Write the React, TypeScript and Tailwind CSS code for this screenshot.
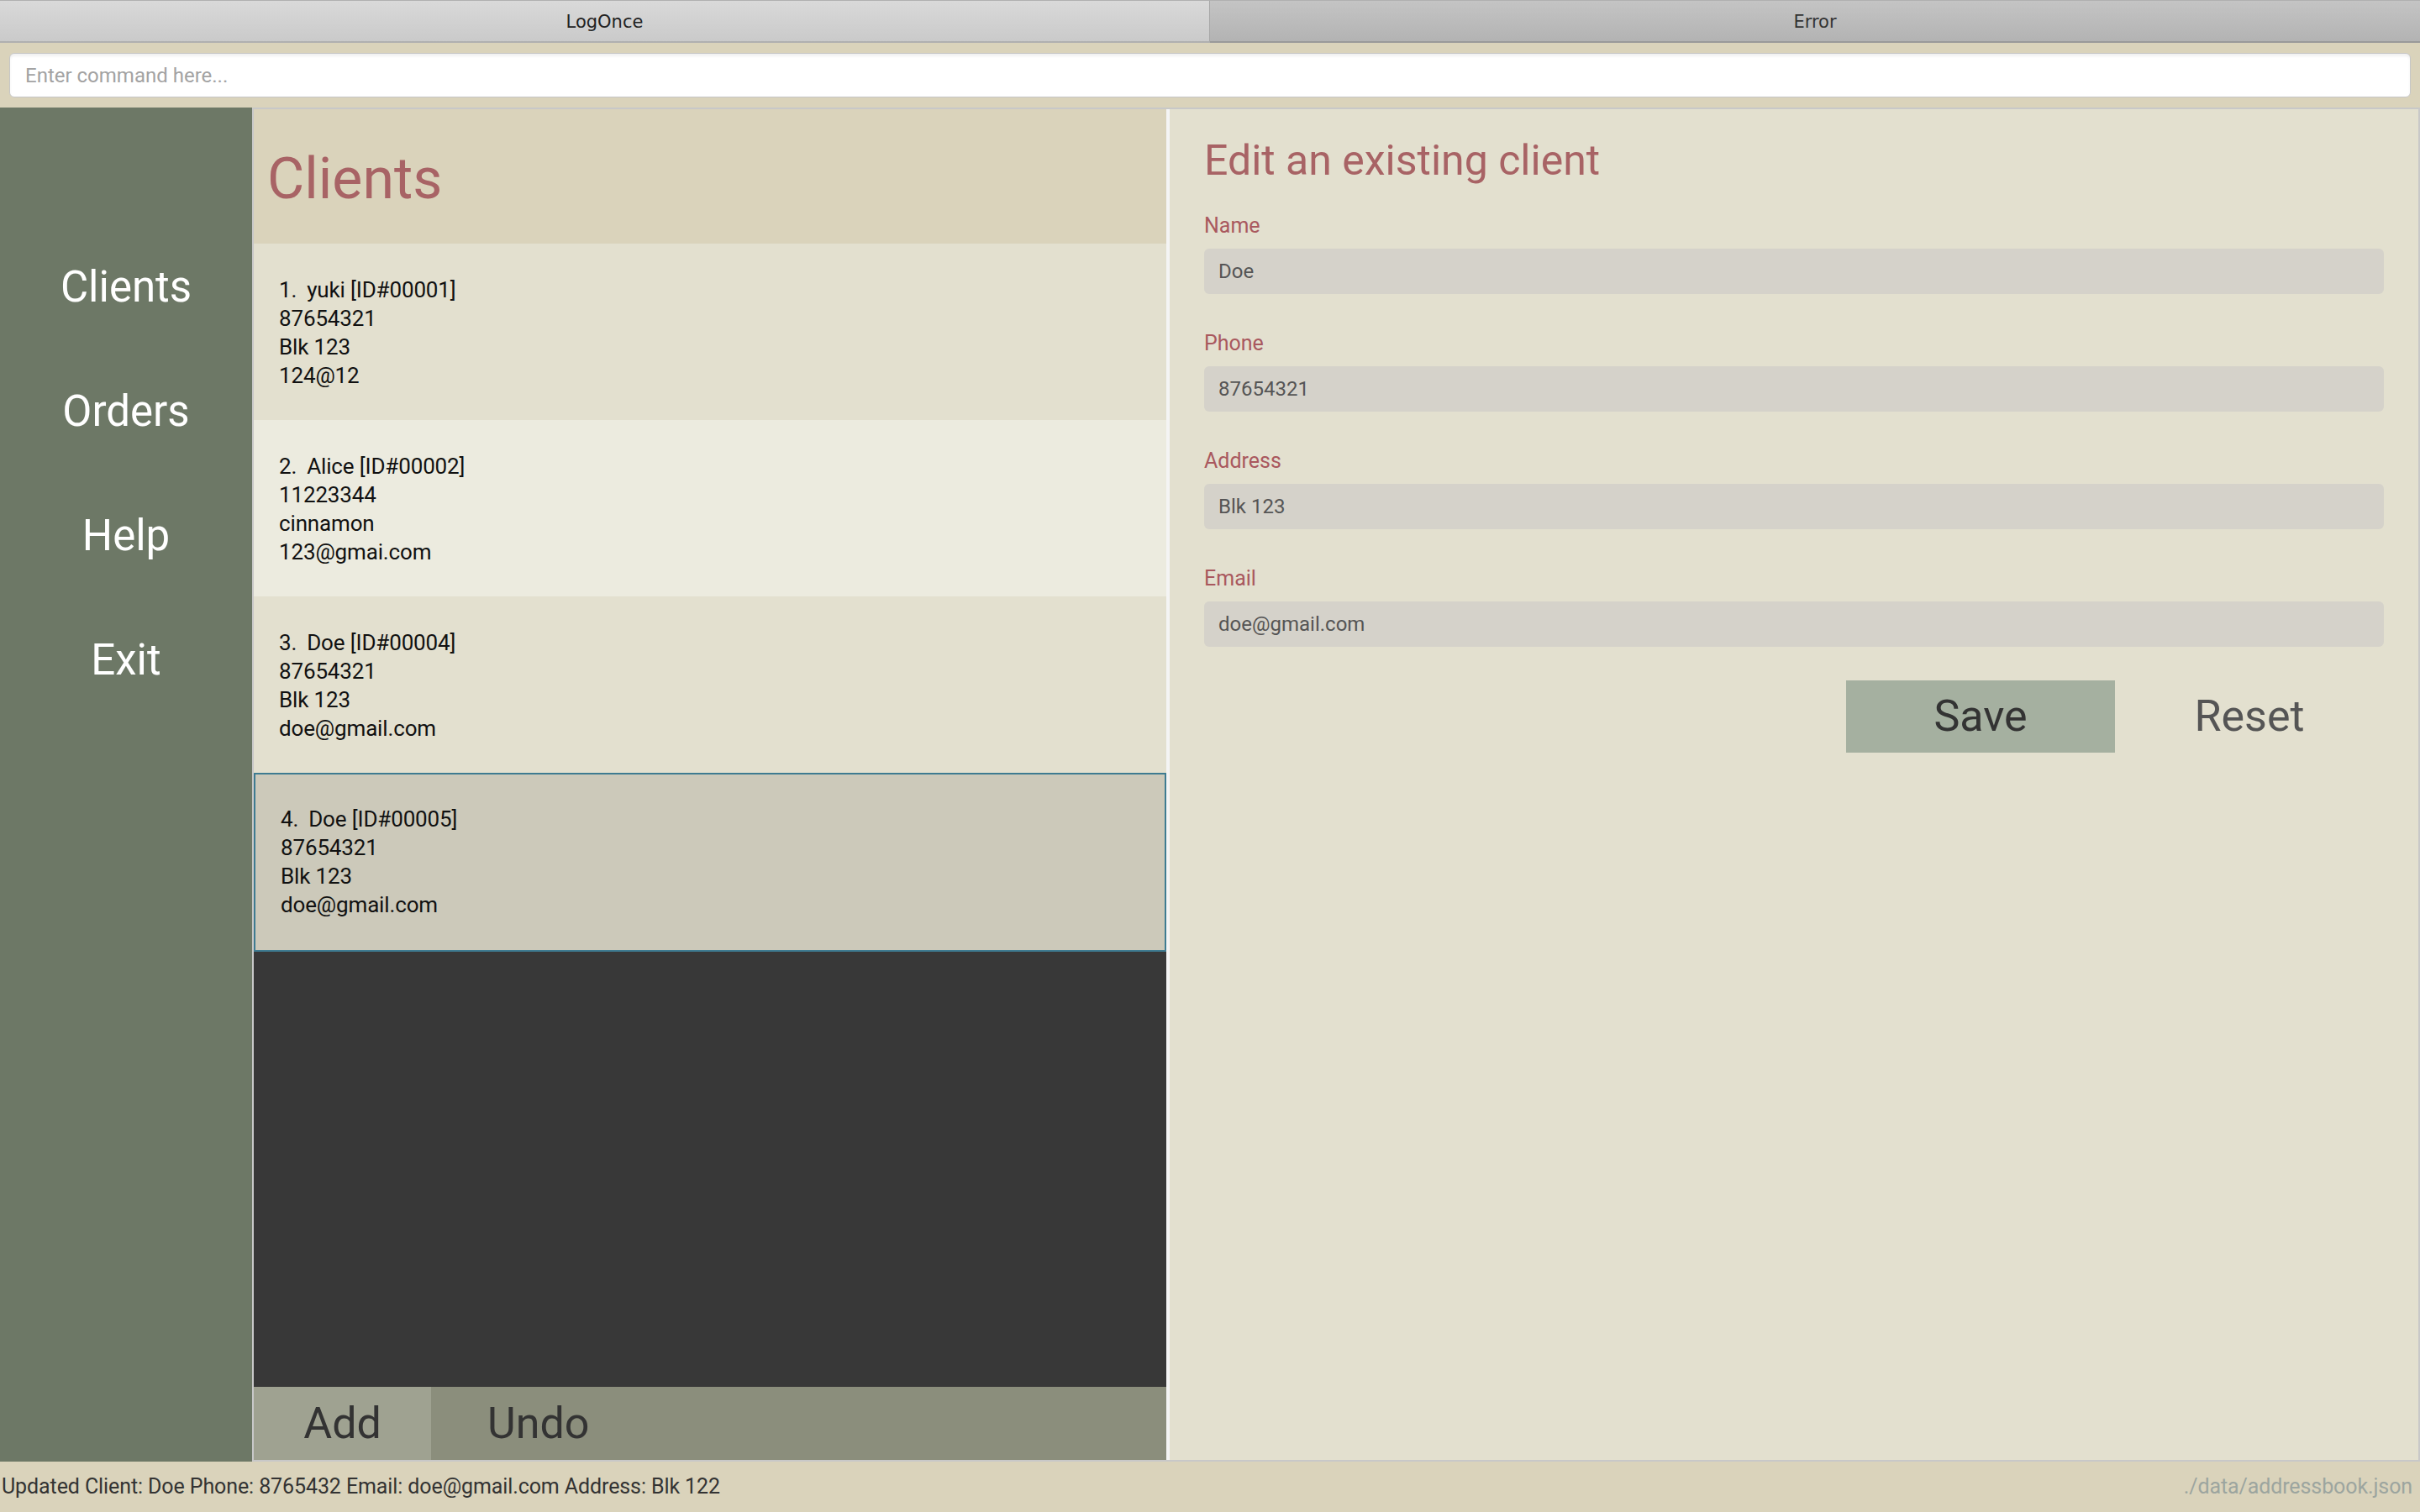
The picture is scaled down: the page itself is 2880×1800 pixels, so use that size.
import React from "react";

type Client = {
    id: string;
    name: string;
    phone: string;
    address: string;
    email: string;
};

const clients: Client[] = [
    { id: "00001", name: "yuki", phone: "87654321", address: "Blk 123", email: "124@12" },
    { id: "00002", name: "Alice", phone: "11223344", address: "cinnamon", email: "123@gmai.com" },
    { id: "00004", name: "Doe", phone: "87654321", address: "Blk 123", email: "doe@gmail.com" },
    { id: "00005", name: "Doe", phone: "87654321", address: "Blk 123", email: "doe@gmail.com" },
];

const font = "font-['Roboto','Liberation_Sans',sans-serif]";

const ClientCard = ({ client, index, selected }: { client: Client; index: number; selected: boolean }) => {
    const bg = selected
        ? "bg-[#ccc9ba] border-2 border-[#3e7b91] h-[213px] pl-[30px] pt-[36px]"
        : index % 2 === 0
        ? "bg-[#e3e0cf] h-[210px] pl-[30px] pt-[38px]"
        : "bg-[#ecebdf] h-[210px] pl-[30px] pt-[38px]";
    return (
        <div className={`${bg} shrink-0 text-[26px] leading-[34px] tracking-[-0.15px] text-[#111]`}>
            <div>
                {index + 1}.<span className="ml-[12px]">{client.name} [ID#{client.id}]</span>
            </div>
            <div>{client.phone}</div>
            <div>{client.address}</div>
            <div>{client.email}</div>
        </div>
    );
};

const Field = ({ label, value, first }: { label: string; value: string; first?: boolean }) => (
    <div className={first ? "mt-[40px]" : "mt-[46px]"}>
        <div className="text-[25px] leading-none text-[#a9585e]">{label}</div>
        <div className="mt-[15px] h-[54px] rounded-[6px] bg-[#d5d2ca] pl-[17px] flex items-center text-[24px] text-[#555]">
            {value}
        </div>
    </div>
);

export default function App() {
    const navItems = ["Clients", "Orders", "Help", "Exit"];

    return (
        <div className={`${font} w-[2880px] h-[1800px] flex flex-col bg-[#dad3bb] overflow-hidden`}>
            {/* tab bar */}
            <div className="h-[51px] flex shrink-0 border-t border-[#b0b0b0] font-['DejaVu_Sans',sans-serif] text-[21px] text-[#222]">
                <div className="w-[1440px] flex items-center justify-center pt-[4px] bg-gradient-to-b from-[#d9d9d9] to-[#cacaca] border-b-2 border-[#b0b0b0] border-r border-r-[#a8a8a8]">
                    LogOnce
                </div>
                <div className="flex-1 flex items-center justify-center pt-[4px] bg-gradient-to-b from-[#c4c4c4] to-[#b3b3b3] border-b-2 border-[#9a9a9a] text-[#333]">
                    Error
                </div>
            </div>

            {/* command box */}
            <div className="h-[77px] shrink-0 px-[11px] pt-[12px]">
                <div className="h-[53px] rounded-[6px] bg-white border border-[#c6c6c6] shadow-[inset_0_3px_3px_rgba(0,0,0,0.06)] flex items-center pl-[18px] text-[24px] text-[#a3a3a3]">
                    Enter command here...
                </div>
            </div>

            {/* main */}
            <div className="flex-1 flex min-h-0">
                <div className="w-[300px] shrink-0 bg-[#6d7866] flex flex-col pt-[140px]">
                    {navItems.map((item) => (
                        <div key={item} className="h-[148px] flex items-center justify-center text-[51px] text-white">
                            {item}
                        </div>
                    ))}
                </div>

                <div className="flex-1 flex border-2 border-[#c8c8c8] min-w-0">
                    {/* client list */}
                    <div className="w-[1086px] shrink-0 flex flex-col">
                        <div className="h-[160px] shrink-0 bg-[#dad3bb] pl-[16px] pt-[49px] text-[68px] leading-none text-[#a86365]">
                            Clients
                        </div>
                        {clients.map((c, i) => (
                            <ClientCard key={c.id} client={c} index={i} selected={i === 3} />
                        ))}
                        <div className="flex-1 bg-[#383838]" />
                        <div className="h-[87px] shrink-0 flex bg-[#8b8e7c] text-[52px] text-[#333]">
                            <div className="w-[211px] bg-[#9fa291] flex items-center justify-center">Add</div>
                            <div className="px-[67px] flex items-center">Undo</div>
                        </div>
                    </div>

                    <div className="w-[4px] shrink-0 bg-[#f4f4f4]" />

                    {/* edit form */}
                    <div className="flex-1 bg-[#e3e0cf] px-[41px] pt-[36px]">
                        <div className="text-[50px] leading-none text-[#a86365]">Edit an existing client</div>
                        <Field label="Name" value="Doe" first />
                        <Field label="Phone" value="87654321" />
                        <Field label="Address" value="Blk 123" />
                        <Field label="Email" value="doe@gmail.com" />
                        <div className="mt-[40px] flex justify-end text-[52px]">
                            <div className="w-[320px] h-[86px] bg-[#a5b0a0] flex items-center justify-center text-[#333]">
                                Save
                            </div>
                            <div className="w-[320px] h-[86px] flex items-center justify-center text-[#555]">
                                Reset
                            </div>
                        </div>
                    </div>
                </div>
            </div>

            {/* status bar */}
            <div className="h-[60px] shrink-0 flex items-center justify-between pl-[2px] pr-[9px] text-[25px] tracking-[-0.1px]">
                <span className="text-[#333]">Updated Client: Doe Phone: 8765432 Email: doe@gmail.com Address: Blk 122</span>
                <span className="text-[#9ca59f]">./data/addressbook.json</span>
            </div>
        </div>
    );
}
